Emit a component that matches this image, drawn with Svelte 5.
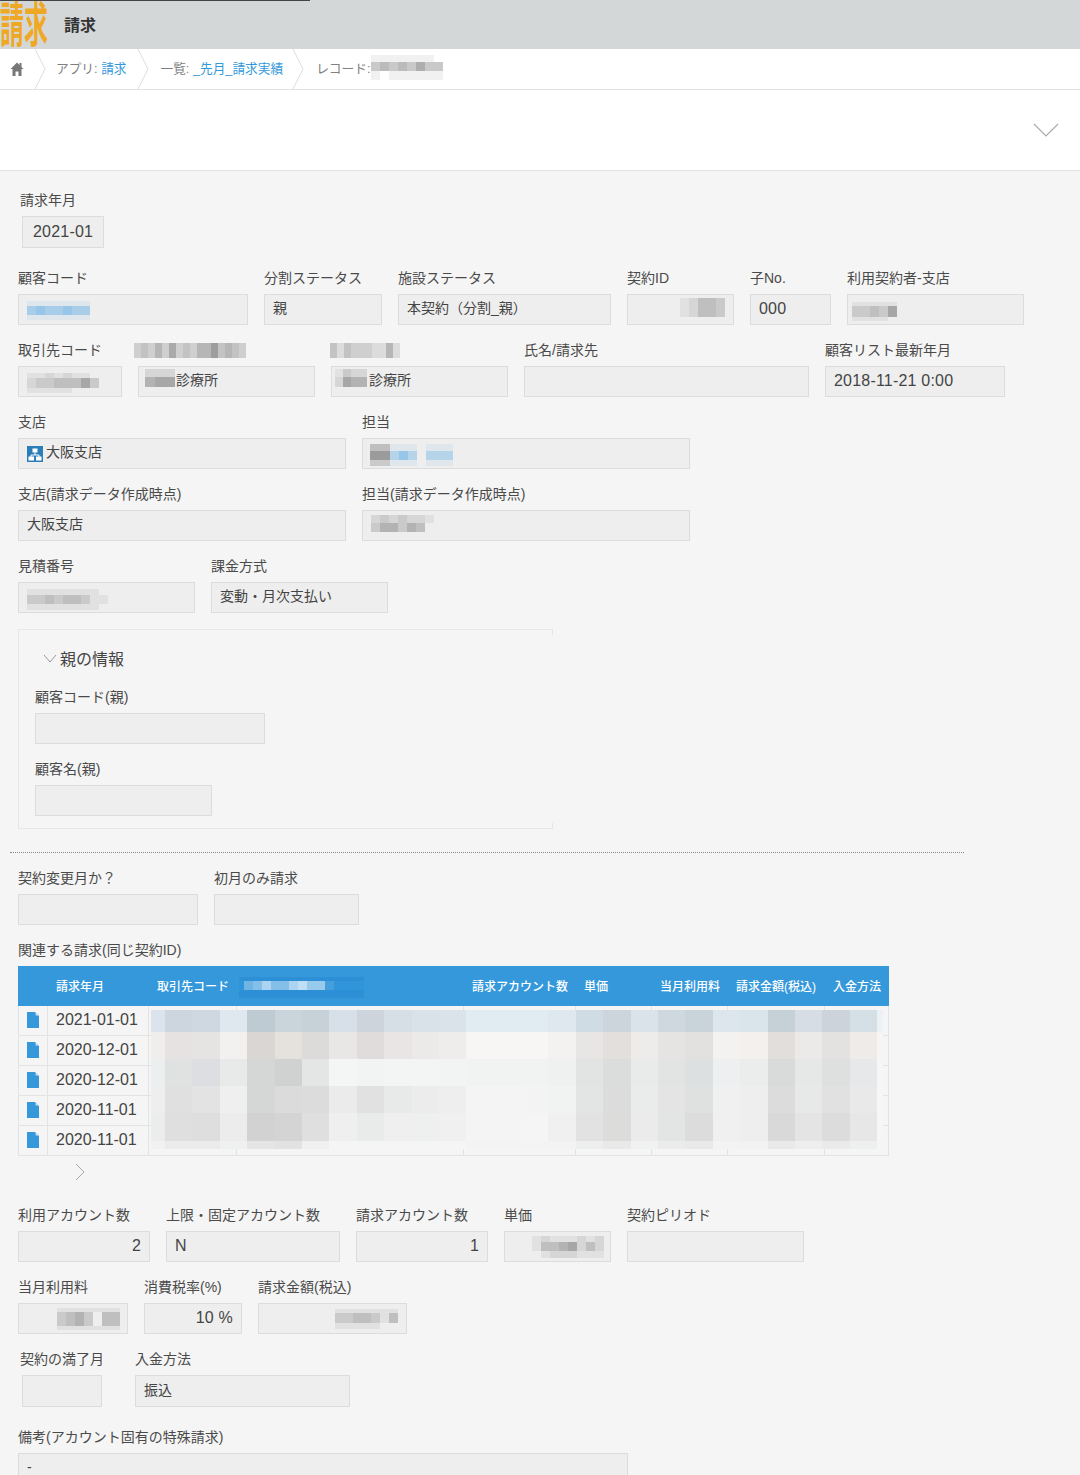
<script>
  const g = [120, 120, 120];
  const b = [95, 172, 228];

  const rowsTop = [
    [
      { label: '顧客コード', w: 230, m: [{ x: 8, y: 6, cw: 9, hs: [5, 9, 5], c: b, rows: ['1111111000', '5655655000', '1111111000'] }] },
      { label: '分割ステータス', w: 118, v: '親' },
      { label: '施設ステータス', w: 213, v: '本契約（分割_親）' },
      { label: '契約ID', w: 107, m: [{ x: 43, y: 3, cw: 9, hs: [19], c: g, rows: ['012443'] }] },
      { label: '子No.', w: 81, v: '000', num: true },
      { label: '利用契約者-支店', w: 177, m: [{ x: 4, y: 7, cw: 9, hs: [4, 11, 4], c: g, rows: ['11111', '33436', '11110'] }] }
    ],
    [
      { label: '取引先コード', w: 104, m: [{ x: 8, y: 6, cw: 9, hs: [5, 10, 5], c: g, rows: ['11212110', '23344463', '11111000'] }] },
      { label: '', w: 177, v: '診療所', indent: 29,
        lm: { x: -4, y: 9, cw: 7, hs: [15], c: g, rows: ['3435363435574543'] },
        m: [{ x: 6, y: 2, cw: 10, hs: [8, 10], c: g, rows: ['222', '566'] }] },
      { label: '', w: 177, v: '診療所', indent: 29,
        lm: { x: -1, y: 9, cw: 7, hs: [15], c: g, rows: ['42433322520'] },
        m: [{ x: 3, y: 2, cw: 8, hs: [8, 10], c: g, rows: ['1322', '2655'] }] },
      { label: '氏名/請求先', w: 285 },
      { label: '顧客リスト最新年月', w: 180, v: '2018-11-21 0:00', num: true }
    ],
    [
      { label: '支店', w: 328, v: '大阪支店', org: true },
      { label: '担当', w: 328, m: [
        { x: 7, y: 5, cw: 10, hs: [7, 9, 6], c: g, rows: ['44', '77', '33'] },
        { x: 27, y: 5, cw: 9, hs: [7, 9, 6], c: b, rows: ['1110111', '4640444', '1110111'] }
      ] }
    ],
    [
      { label: '支店(請求データ作成時点)', w: 328, v: '大阪支店' },
      { label: '担当(請求データ作成時点)', w: 328, m: [{ x: 8, y: 4, cw: 9, hs: [8, 9], c: g, rows: ['2323221', '3553540'] }] }
    ],
    [
      { label: '見積番号', w: 177, m: [{ x: 8, y: 6, cw: 9, hs: [6, 9, 6], c: g, rows: ['1111111100', '3343443110', '1111111100'] }] },
      { label: '課金方式', w: 177, v: '変動・月次支払い' }
    ]
  ];

  const parentRows = [
    [{ label: '顧客コード(親)', w: 230 }],
    [{ label: '顧客名(親)', w: 177 }]
  ];

  const midRow = [
    { label: '契約変更月か？', w: 180 },
    { label: '初月のみ請求', w: 145 }
  ];

  const bottomRows = [
    [
      { label: '利用アカウント数', w: 132, v: '2', num: true, right: true },
      { label: '上限・固定アカウント数', w: 174, v: 'N', num: true },
      { label: '請求アカウント数', w: 132, v: '1', num: true, right: true },
      { label: '単価', w: 107, m: [{ x: 18, y: 4, cw: 9, hs: [6, 9, 7], c: g, rows: ['012111212', '014456242', '001222111'] }] },
      { label: '契約ピリオド', w: 177 }
    ],
    [
      { label: '当月利用料', w: 110, m: [{ x: 38, y: 4, cw: 9, hs: [4, 14, 4], c: g, rows: ['1111111', '3453044', '1111111'] }] },
      { label: '消費税率(%)', w: 98, v: '10 %', num: true, right: true },
      { label: '請求金額(税込)', w: 149, m: [{ x: 76, y: 5, cw: 9, hs: [4, 10, 6], c: g, rows: ['1111111', '3344314', '1111100'] }] }
    ]
  ];

  const headers = ['', '請求年月', '取引先コード', '', '請求アカウント数', '単価', '当月利用料', '請求金額(税込)', '入金方法'];
  const colWidths = [30, 101, 88, 227, 112, 76, 76, 97, 64];
  const dates = ['2021-01-01', '2020-12-01', '2020-12-01', '2020-11-01', '2020-11-01'];

  const blur = [
    'dbe4ec cdd6de cfd8e0 e0e8ef bfcbd2 c9d4db c6d1d8 d7e0e8 cdd4dc d6dee6 dae2e9 dae3ea e1ecf2 e1ecf2 e1ecf2 e0e8ef d0dce3 ccd4dc dae3ea cfd7df c9d4da dee6ed d9e5eb c6d1d7 d6dde4 ccd3da d4e0e6 ecf1f6',
    'f0eeec e6e2e1 e6e4e2 f3f1ef dad6d3 e5e1dd dddbd9 e9e7e5 e0dcdb e9e5e4 eceae8 efedeb f8f6f4 f8f6f4 f8f6f4 f4f2f0 e8e6e4 e3dfdd eeecea e6e4e2 e3e1df f4f2f0 f3f0ed e2dedb eceae8 e4e2e0 efebe9 f6f5f4',
    'ecefef e0e2e2 dcdee1 e8eaea d5d7d7 d0d2d2 e4e6e6 f4f6f6 f2f3f3 f3f5f5 f3f5f5 f2f4f4 f1f3f3 f1f3f3 f1f3f3 eff1f1 e2e4e4 dbdcdc e9ebeb e2e4e4 dde0e0 eeeff1 ebeded d9dbdb e6e8e8 dee0e0 e6e8ea f5f6f6',
    'eeeeee e0e0e0 e3e3e3 efefef d5d7d7 dbdbdb dcdcdc ebebeb e1e1e1 e8eaea ececec eeeeee f4f4f4 f4f4f4 f3f3f3 f1f3f3 e3e5e5 dcdcdc eaecec e4e4e4 dfe1e1 f0f0f0 eeeeee dcdcdc e7e9e9 e1e1e1 e9e9e9 f6f6f6',
    'ebeded dfdfdf dedede ececec d2d2d2 d4d4d4 dfdfdf efefef e9ebeb efefef eef0f0 f0f0f0 f4f4f4 f4f4f4 f5f5f5 f0f0f0 e2e2e2 dcdcda ebebeb e3e5e5 dcdcdc f0f0f0 eeeeee d9d9d9 e4e4e4 dcdcdc e7e7e7 f6f6f6',
    'f1f1f1 ebebeb ebebeb eff0f0 e5e5e5 e2e2e2 f0f0f0 f5f5f5 f5f5f5 f5f5f5 f5f5f5 f5f5f5 f3f3f3 f3f3f3 f3f3f3 f3f3f3 edefef e9e9e9 f0f2f2 ebebeb e9e9e9 f3f3f3 f2f2f2 e9e9e9 eeeeee eaeaea eef0f0 f5f5f5'
  ].map((r) => r.split(' '));
  const blurHeights = [22, 27, 27, 27, 28, 8];

  const crumbMosaic = { x: 0, y: -12, cw: 9, hs: [7, 9, 9], c: g, rows: ['11111110', '45454644', '10111111'] };
  const headMosaicLight = { x: 5, y: 4, cw: 9, hs: [9], c: [255, 255, 255], rows: ['3464467551'] };
  const headMosaicDark = { x: 0, y: 0, cw: 125, hs: [4, 9, 8], c: [30, 125, 205], rows: ['3', '1', '3'] };

  function cellStyle(m, ch, h) {
    const a = Number(ch) / 10;
    return `width:${m.cw}px;height:${h}px;background:rgba(${m.c.join(',')},${a})`;
  }
</script>

{#snippet mosaic(m)}
  <span class="mosaic" style="left:{m.x}px;top:{m.y}px">
    {#each m.rows as row, i}
      <span class="mrow">
        {#each row.split('') as ch}
          <i style={cellStyle(m, ch, m.hs[i])}></i>
        {/each}
      </span>
    {/each}
  </span>
{/snippet}

{#snippet field(f)}
  <div class="field" style="width:{f.w}px">
    <div class="label">{f.label}</div>
    {#if f.lm}{@render mosaic(f.lm)}{/if}
    <div class="box" class:num={f.num} class:right={f.right}>
      {#if f.org}
        <svg class="org" viewBox="0 0 16 16" width="16" height="16">
          <rect width="16" height="16" fill="#2a7fb8" />
          <rect x="5.5" y="2.5" width="5" height="4" fill="#fff" />
          <path d="M8 6.5V9M4 11V9H12V11" stroke="#fff" fill="none" />
          <rect x="1.5" y="10.5" width="5.5" height="4" fill="#fff" />
          <rect x="9" y="10.5" width="5.5" height="4" fill="#fff" />
        </svg>
      {/if}
      {#if f.v}<span class="val" style="padding-left:{f.indent ?? 0}px">{f.v}</span>{/if}
      {#if f.m}{#each f.m as m}{@render mosaic(m)}{/each}{/if}
    </div>
  </div>
{/snippet}

<div class="page">
  <header class="top">
    <div class="topline"></div>
    <div class="logo"><span>請求</span></div>
    <div class="title">請求</div>
  </header>

  <nav class="crumbs">
    <svg class="home" viewBox="0 0 14 14" width="14" height="14">
      <path d="M7 0.5L0.5 7H2.5V14H5.5V9.5H8.5V14H11.5V7H13.5L11.5 5V1H9.5V3Z" fill="#777" />
    </svg>
    <svg class="sep s1" viewBox="0 0 12 40" width="12" height="40"><path d="M1 0L11 20L1 40" /></svg>
    <span class="crumb c1">アプリ: <a>請求</a></span>
    <svg class="sep s2" viewBox="0 0 12 40" width="12" height="40"><path d="M1 0L11 20L1 40" /></svg>
    <span class="crumb c2">一覧: <a>_先月_請求実績</a></span>
    <svg class="sep s3" viewBox="0 0 12 40" width="12" height="40"><path d="M1 0L11 20L1 40" /></svg>
    <span class="crumb c3">レコード:<span class="cm">{@render mosaic(crumbMosaic)}</span></span>
  </nav>

  <div class="toolbar">
    <svg viewBox="0 0 26 14" width="26" height="14"><path d="M1 1L13 13L25 1" /></svg>
  </div>

  <main class="form">
    <div class="row first">
      {@render field({ label: '請求年月', w: 82, v: '2021-01', num: true })}
    </div>

    {#each rowsTop as row}
      <div class="row">
        {#each row as f}{@render field(f)}{/each}
      </div>
    {/each}

    <section class="group">
      <div class="gtitle">
        <svg viewBox="0 0 14 9" width="14" height="9"><path d="M1 1L7 8L13 1" /></svg>
        <span>親の情報</span>
      </div>
      {#each parentRows as row}
        <div class="row inner">
          {#each row as f}{@render field(f)}{/each}
        </div>
      {/each}
    </section>

    <div class="dotted"></div>

    <div class="row">
      {#each midRow as f}{@render field(f)}{/each}
    </div>

    <div class="rel-label">関連する請求(同じ契約ID)</div>
    <div class="table-wrap">
      <table>
        <colgroup>
          {#each colWidths as w}<col style="width:{w}px" />{/each}
        </colgroup>
        <thead>
          <tr>
            {#each headers as h, i}
              <th>
                {h}
                {#if i === 3}
                  <span class="thm">
                    {@render mosaic(headMosaicDark)}
                    {@render mosaic(headMosaicLight)}
                  </span>
                {/if}
              </th>
            {/each}
          </tr>
        </thead>
        <tbody>
          {#each dates as d}
            <tr>
              <td class="ic">
                <svg viewBox="0 0 12 16" width="12" height="16">
                  <path d="M0 0H8L12 4V16H0Z" fill="#3498db" />
                  <path d="M8.6 0.4L11.6 3.4H8.6Z" fill="#cfe4f4" />
                </svg>
              </td>
              <td class="date">{d}</td>
              <td></td><td></td><td></td><td></td><td></td><td></td><td></td>
            </tr>
          {/each}
        </tbody>
      </table>
      <div class="blur">
        {#each blur as row, i}
          {#each row as c}
            <i style="background:#{c};height:{blurHeights[i]}px"></i>
          {/each}
        {/each}
      </div>
    </div>
    <div class="pager">
      <svg viewBox="0 0 10 18" width="10" height="18"><path d="M1 1L9 9L1 17" /></svg>
    </div>

    {#each bottomRows as row}
      <div class="row">
        {#each row as f}{@render field(f)}{/each}
      </div>
    {/each}

    <div class="row pay">
      {@render field({ label: '契約の満了月', w: 80 })}
      {@render field({ label: '入金方法', w: 215, v: '振込' })}
    </div>

    <div class="row">
      {@render field({ label: '備考(アカウント固有の特殊請求)', w: 610, v: '-' })}
    </div>
  </main>
</div>

<style>
  :global(body) {
    margin: 0;
    background: #f5f5f5;
  }
  .page {
    width: 1080px;
    height: 1475px;
    overflow: hidden;
    font-family: "Liberation Sans", "Noto Sans CJK JP", sans-serif;
    font-size: 14px;
    color: #444;
  }
  .top {
    position: relative;
    height: 49px;
    background: #d4d7d7;
    display: flex;
    align-items: center;
    overflow: hidden;
  }
  .topline {
    position: absolute;
    left: 0;
    top: 0;
    width: 310px;
    height: 1px;
    background: #444;
  }
  .logo {
    width: 64px;
    flex: none;
    height: 49px;
    color: #efa824;
    font-size: 24px;
    font-weight: 700;
    display: flex;
    align-items: center;
  }
  .logo span {
    display: block;
    line-height: 24px;
    margin-top: 2px;
    transform: scaleY(2);
  }
  .title {
    font-size: 16px;
    font-weight: 700;
    color: #333;
    margin-bottom: 2px;
  }
  .crumbs {
    position: relative;
    display: flex;
    align-items: center;
    height: 40px;
    background: #fff;
    border-bottom: 1px solid #e3e3e3;
    color: #808080;
    font-size: 12.7px;
  }
  .home {
    margin-left: 10px;
    flex: none;
  }
  .sep {
    flex: none;
    align-self: flex-start;
  }
  .sep path {
    fill: none;
    stroke: #ddd;
  }
  .s1 { margin-left: 10px; }
  .s2 { margin-left: 10px; }
  .s3 { margin-left: 9px; }
  .crumb {
    white-space: nowrap;
    margin-bottom: 4px;
  }
  .c1 { margin-left: 10px; }
  .c2 { margin-left: 12px; }
  .c3 { margin-left: 12px; display: flex; align-items: center; }
  .crumb a { color: #3498db; }
  .cm {
    position: relative;
    display: inline-block;
    width: 72px;
    height: 1px;
    margin-left: 1px;
  }
  .toolbar {
    height: 80px;
    background: #fff;
    border-bottom: 1px solid #e3e3e3;
    display: flex;
    justify-content: flex-end;
    align-items: center;
    padding-right: 21px;
  }
  .toolbar svg path {
    fill: none;
    stroke: #aaa;
    stroke-width: 1.2;
  }
  .form {
    padding-top: 13px;
  }
  .row {
    display: flex;
    gap: 16px;
    padding-left: 18px;
    margin-bottom: 9px;
  }
  .row.first {
    padding-left: 22px;
    margin-bottom: 14px;
  }
  .row.first .label {
    margin-left: -2px;
  }
  .row.first .box {
    height: 32px;
    padding-left: 10px;
  }
  .row.inner {
    padding-left: 16px;
  }
  .row.inner:last-child {
    margin-bottom: 3px;
  }
  .row.pay {
    padding-left: 22px;
    gap: 33px;
    margin-bottom: 14px;
  }
  .row.pay .box {
    height: 32px;
  }
  .row.pay .field:first-child .label {
    margin-left: -2px;
    white-space: nowrap;
  }
  .field {
    position: relative;
    flex: none;
  }
  .label {
    height: 32px;
    line-height: 32px;
    color: #4a4a4a;
    white-space: nowrap;
  }
  .box {
    position: relative;
    box-sizing: border-box;
    height: 31px;
    line-height: 27px;
    padding: 0 8px 2px;
    background: #eee;
    border: 1px solid #dcdcdc;
    color: #444;
    display: flex;
    align-items: center;
    white-space: nowrap;
    overflow: hidden;
  }
  .box.num {
    font-size: 16px;
    letter-spacing: 0.2px;
  }
  .box.right {
    justify-content: flex-end;
  }
  .org {
    flex: none;
    margin: 2px 3px 0 0;
  }
  .mosaic {
    position: absolute;
    display: block;
  }
  .mrow {
    display: flex;
  }
  .mrow i {
    display: block;
    flex: none;
  }
  .group {
    position: relative;
    box-sizing: border-box;
    width: 535px;
    height: 200px;
    margin: 16px 0 23px 18px;
    border: 1px solid #e6e6e6;
    border-right: 0;
  }
  .group::before,
  .group::after {
    content: "";
    position: absolute;
    right: 0;
    width: 1px;
    height: 5px;
    background: #e6e6e6;
  }
  .group::before { top: 0; }
  .group::after { bottom: 0; }
  .gtitle {
    display: flex;
    align-items: center;
    height: 32px;
    padding: 12px 0 7px 24px;
    font-size: 16px;
    color: #444;
  }
  .gtitle svg {
    margin-right: 3px;
  }
  .gtitle svg path {
    fill: none;
    stroke: #999;
  }
  .dotted {
    width: 954px;
    margin: 0 0 9px 10px;
    border-top: 1px dotted #888;
  }
  .rel-label {
    height: 32px;
    line-height: 32px;
    padding-left: 18px;
    color: #4a4a4a;
  }
  .table-wrap {
    position: relative;
    width: 871px;
    margin-left: 18px;
  }
  table {
    width: 871px;
    table-layout: fixed;
    border-collapse: separate;
    border-spacing: 0;
  }
  thead tr {
    height: 40px;
  }
  th {
    position: relative;
    box-sizing: border-box;
    background: #3498db;
    padding: 0 0 2px 8px;
    text-align: left;
    color: #fff;
    font-size: 12px;
    font-weight: 500;
    white-space: nowrap;
  }
  .thm {
    position: absolute;
    left: 2px;
    top: 11px;
  }
  tbody tr {
    height: 30px;
  }
  td {
    box-sizing: border-box;
    height: 30px;
    padding: 0;
    border-right: 1px solid #e3e3e3;
    border-bottom: 1px solid #e3e3e3;
  }
  td:first-child {
    border-left: 1px solid #e3e3e3;
  }
  td.ic {
    text-align: center;
    line-height: 0;
  }
  td.ic svg {
    margin: 0 0 2px -1px;
  }
  td.date {
    padding: 0 0 2px 8px;
    font-size: 16px;
    color: #444;
  }
  .blur {
    position: absolute;
    left: 133px;
    top: 44px;
    display: grid;
    grid-template-columns: 14px repeat(26, 27.4px) 6px;
  }
  .blur i {
    display: block;
  }
  .pager {
    box-sizing: border-box;
    height: 43px;
    padding: 0 0 11px 75px;
    display: flex;
    align-items: center;
  }
  .pager svg path {
    fill: none;
    stroke: #aaa;
  }
</style>
